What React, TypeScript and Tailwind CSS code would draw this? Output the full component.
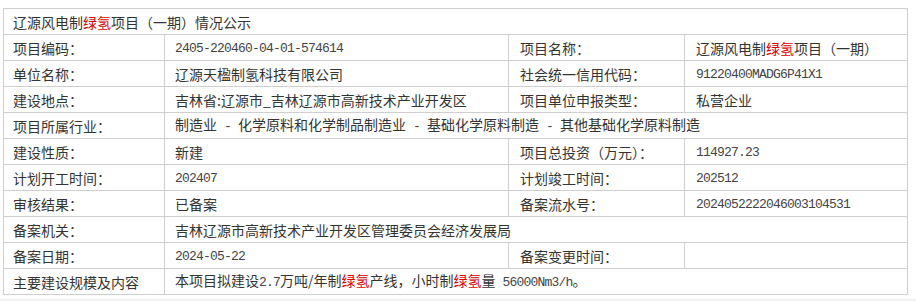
const cjk = { fontFamily: '"Noto Sans CJK SC", "Noto Sans", sans-serif' };

const Red = ({ children }: { children: React.ReactNode }) => (
  <span className="text-[#d00]">{children}</span>
);

const Num = ({ children }: { children: React.ReactNode }) => (
  <span className="font-['Liberation_Mono',monospace] text-[13px] tracking-[-0.8px] text-[#444]">{children}</span>
);

const td = 'border border-[#cfcfcf] px-[9px] py-0 h-[26px] align-middle whitespace-nowrap';

const App = () => {
  return (
    <div className="w-[916px] h-[301px] bg-white overflow-hidden">
      <div className="pt-[8px] pl-[3px] h-[299px]">
        <table
          className="table-fixed border-collapse w-[904px] text-[14px] leading-[16px] text-[#333]"
          style={cjk}
        >
          <colgroup>
            <col className="w-[161px]" />
            <col className="w-[344px]" />
            <col className="w-[176px]" />
            <col className="w-[223px]" />
          </colgroup>
          <tbody>
            <tr>
              <td colSpan={4} className={td}>
                辽源风电制<Red>绿氢</Red>项目（一期）情况公示
              </td>
            </tr>
            <tr>
              <td className={td}>项目编码：</td>
              <td className={td + ' pl-[10px]'}><Num>2405-220460-04-01-574614</Num></td>
              <td className={td + ' pl-[11px]'}>项目名称：</td>
              <td className={td + ' pl-[11px]'}>辽源风电制<Red>绿氢</Red>项目（一期）</td>
            </tr>
            <tr>
              <td className={td}>单位名称：</td>
              <td className={td + ' pl-[10px]'}>辽源天楹制氢科技有限公司</td>
              <td className={td + ' pl-[11px]'}>社会统一信用代码：</td>
              <td className={td + ' pl-[11px]'}><Num>91220400MADG6P41X1</Num></td>
            </tr>
            <tr>
              <td className={td}>建设地点：</td>
              <td className={td + ' pl-[10px]'}>吉林省:辽源市_吉林辽源市高新技术产业开发区</td>
              <td className={td + ' pl-[11px]'}>项目单位申报类型：</td>
              <td className={td + ' pl-[11px]'}>私营企业</td>
            </tr>
            <tr>
              <td className={td}>项目所属行业：</td>
              <td colSpan={3} className={td + ' pl-[10px]'}>
                制造业<Num> - </Num>化学原料和化学制品制造业<Num> - </Num>基础化学原料制造<Num> - </Num>其他基础化学原料制造
              </td>
            </tr>
            <tr>
              <td className={td}>建设性质：</td>
              <td className={td + ' pl-[10px]'}>新建</td>
              <td className={td + ' pl-[11px]'}>项目总投资（万元）：</td>
              <td className={td + ' pl-[11px]'}><Num>114927.23</Num></td>
            </tr>
            <tr>
              <td className={td}>计划开工时间：</td>
              <td className={td + ' pl-[10px]'}><Num>202407</Num></td>
              <td className={td + ' pl-[11px]'}>计划竣工时间：</td>
              <td className={td + ' pl-[11px]'}><Num>202512</Num></td>
            </tr>
            <tr>
              <td className={td}>审核结果：</td>
              <td className={td + ' pl-[10px]'}>已备案</td>
              <td className={td + ' pl-[11px]'}>备案流水号：</td>
              <td className={td + ' pl-[11px]'}><Num>2024052222046003104531</Num></td>
            </tr>
            <tr>
              <td className={td}>备案机关：</td>
              <td colSpan={3} className={td + ' pl-[10px]'}>
                吉林辽源市高新技术产业开发区管理委员会经济发展局
              </td>
            </tr>
            <tr>
              <td className={td}>备案日期：</td>
              <td className={td + ' pl-[10px]'}><Num>2024-05-22</Num></td>
              <td className={td + ' pl-[11px]'}>备案变更时间：</td>
              <td className={td + ' pl-[11px]'}></td>
            </tr>
            <tr>
              <td className={td}>主要建设规模及内容</td>
              <td colSpan={3} className={td + ' pl-[10px]'}>
                本项目拟建设<Num>2.7</Num>万吨/年制<Red>绿氢</Red>产线，小时制<Red>绿氢</Red>量<Num> 56000Nm3/h</Num>。
              </td>
            </tr>
          </tbody>
        </table>
      </div>
      <div className="h-[2px] bg-[#f0f0f0]" />
    </div>
  );
};

export default App;
